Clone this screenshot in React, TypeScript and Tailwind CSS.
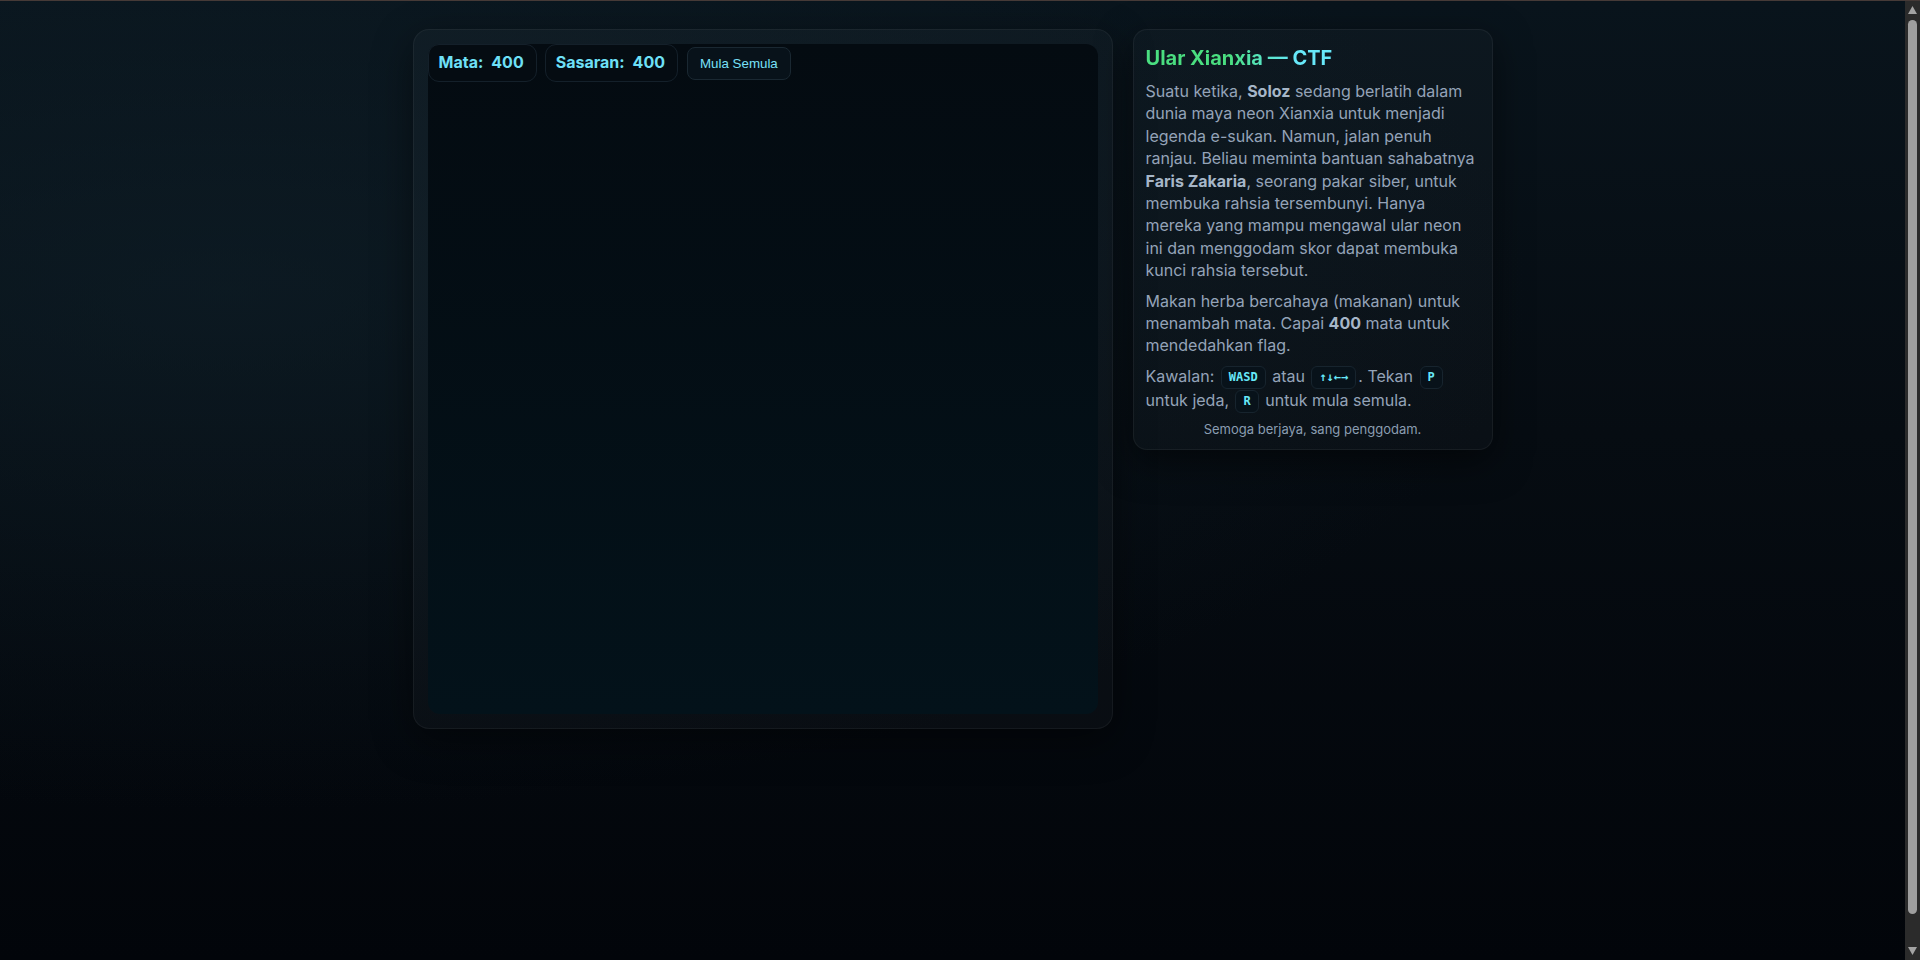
import type { ReactNode } from "react";

const TARGET = 400;

function Stat({ label, value }: { label: string; value: number }) {
	return (
		<div className="flex items-center gap-2 rounded-[11px] border border-[#14202a] bg-[#050c12] pt-[5px] pr-3 pb-[7px] pl-2.5 text-base leading-6 font-bold text-[#6ee0f7]">
			<span>{label}</span>
			<span>{value}</span>
		</div>
	);
}

function Key({ children }: { children: ReactNode }) {
	return (
		<kbd className="mx-[2px] inline-block rounded-md border border-[#17242e] bg-[#08121a] px-[7px] py-[3px] align-[1px] font-['DejaVu_Sans_Mono',monospace] text-[12px] leading-[15px] font-bold text-[#67e8f9]">
			{children}
		</kbd>
	);
}

function Board() {
	return (
		<section className="w-[700px] shrink-0 rounded-2xl border border-white/[0.05] bg-white/[0.025] p-3.5 shadow-[0_12px_40px_rgba(0,0,0,0.45)]">
			<div className="relative h-[670px] w-[670px] rounded-xl bg-[linear-gradient(180deg,#040b11_0%,#03121a_100%)]">
				<div className="absolute top-0 left-0 flex items-center gap-2">
					<Stat label="Mata:" value={TARGET} />
					<Stat label="Sasaran:" value={TARGET} />
					<button className="ml-px rounded-lg border border-[#1a2832] bg-[#08121a] px-3 py-2 font-['Liberation_Sans',Arial,sans-serif] text-[13.33px] leading-[15px] text-[#78e0f8]">
						Mula Semula
					</button>
				</div>
			</div>
		</section>
	);
}

function Story() {
	return (
		<aside className="w-[360px] shrink-0 self-start rounded-[14px] border border-white/[0.05] bg-white/[0.02] px-3 pt-[14px] pb-[11px] text-base leading-[1.4] text-[#94a3b8] shadow-[0_12px_36px_rgba(0,0,0,0.5)]">
			<h2 className="mb-2 inline-block bg-linear-to-r from-[#4ade80] from-45% to-[#67e8f9] to-80% bg-clip-text text-xl leading-7 font-bold text-transparent">
				Ular Xianxia — CTF
			</h2>
			<p>
				Suatu ketika, <strong className="text-[#a6b6c8]">Soloz</strong> sedang berlatih dalam dunia
				maya neon Xianxia untuk menjadi legenda e-sukan. Namun, jalan penuh ranjau. Beliau meminta
				bantuan sahabatnya <strong className="text-[#a6b6c8]">Faris Zakaria</strong>, seorang pakar
				siber, untuk membuka rahsia tersembunyi. Hanya mereka yang mampu mengawal ular neon ini dan
				menggodam skor dapat membuka kunci rahsia tersebut.
			</p>
			<p className="mt-2">
				Makan herba bercahaya (makanan) untuk menambah mata. Capai{" "}
				<strong className="text-[#a6b6c8]">{TARGET}</strong> mata untuk mendedahkan flag.
			</p>
			<p className="mt-2">
				Kawalan: <Key>WASD</Key> atau <Key>↑↓←→</Key>. Tekan <Key>P</Key> untuk jeda, <Key>R</Key>{" "}
				untuk mula semula.
			</p>
			<p className="mt-[7px] text-center text-[13px] leading-[18px] text-[#8a9db1]">
				Semoga berjaya, sang penggodam.
			</p>
		</aside>
	);
}

// classic window scrollbar down the right edge
function Scrollbar() {
	return (
		<div className="flex w-[15px] shrink-0 flex-col items-center bg-[#2b2b2b] pt-[5px] pb-[5px]">
			<svg width="9" height="8" viewBox="0 0 9 8" className="shrink-0">
				<polygon points="4.5,0 9,8 0,8" fill="#a3a3a3" />
			</svg>
			<div className="mt-[6px] mb-[33px] w-[9px] flex-1 rounded-full bg-[#9f9f9f]" />
			<svg width="9" height="8" viewBox="0 0 9 8" className="shrink-0">
				<polygon points="0,0 9,0 4.5,8" fill="#a3a3a3" />
			</svg>
		</div>
	);
}

export default function App() {
	return (
		<div className="flex h-screen flex-col overflow-hidden border-t border-[#463a37] bg-[#03060a] font-['Inter','Noto_Sans',sans-serif]">
			<div className="flex min-h-0 flex-1">
				<div className="flex-1 bg-[image:radial-gradient(ellipse_at_12%_30%,rgba(16,34,44,0.55)_0%,transparent_55%),linear-gradient(180deg,#09141c_0%,#060c12_45%,#02050a_100%)]">
					<main className="mx-auto flex w-[1080px] items-start gap-5 pt-7">
						<Board />
						<Story />
					</main>
				</div>
				<Scrollbar />
			</div>
		</div>
	);
}
